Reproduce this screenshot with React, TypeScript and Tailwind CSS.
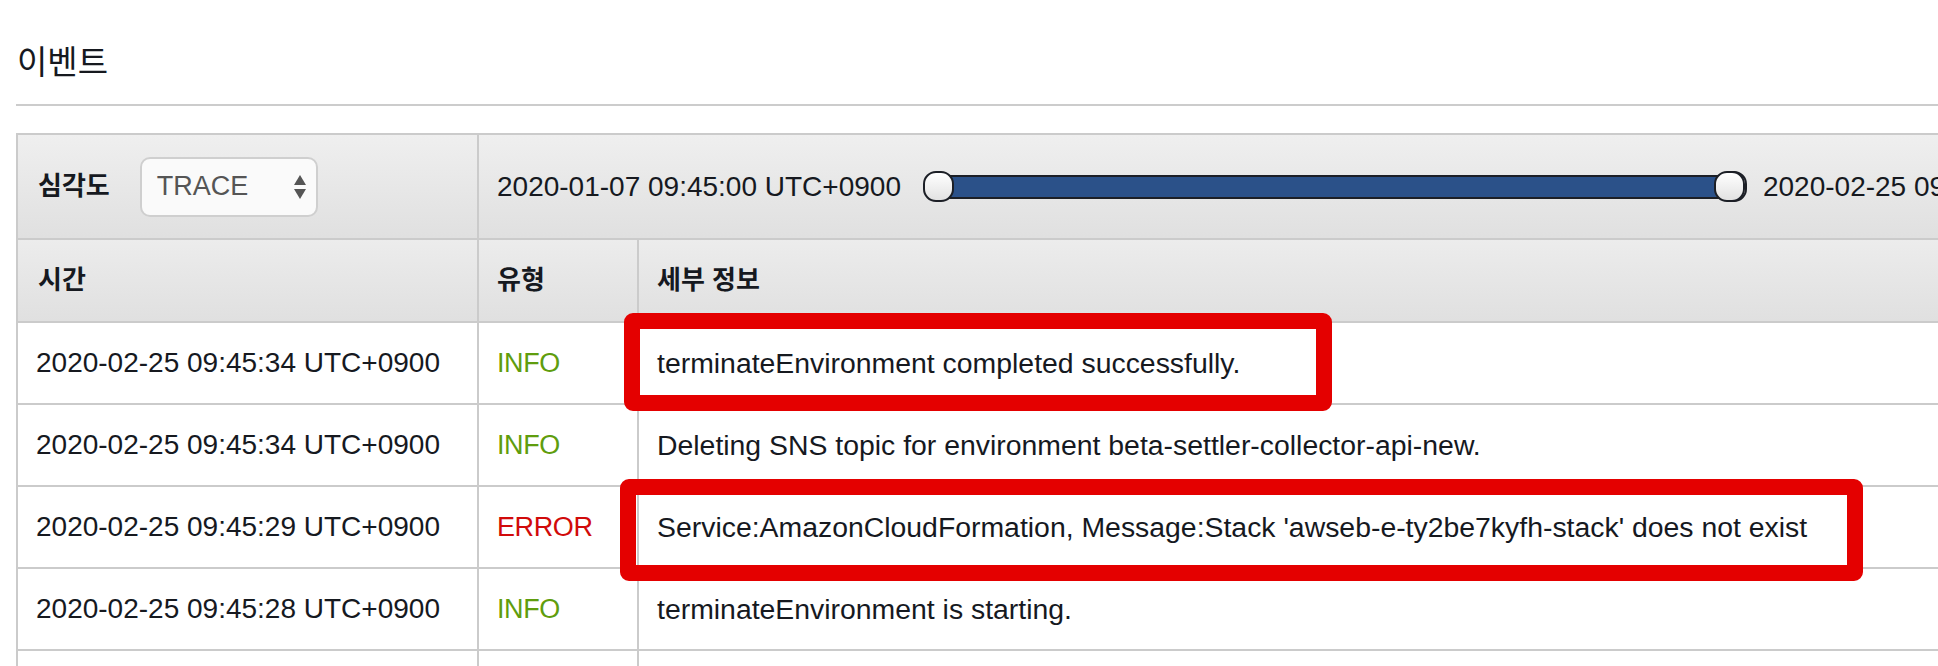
const FONT = { fontFamily: '"Liberation Sans", "Noto Sans CJK KR", Arial, sans-serif' };

type EventRow = {
  time: string;
  type: 'INFO' | 'ERROR' | '';
  detail: string;
};

const rows: EventRow[] = [
  { time: '2020-02-25 09:45:34 UTC+0900', type: 'INFO', detail: 'terminateEnvironment completed successfully.' },
  { time: '2020-02-25 09:45:34 UTC+0900', type: 'INFO', detail: 'Deleting SNS topic for environment beta-settler-collector-api-new.' },
  { time: '2020-02-25 09:45:29 UTC+0900', type: 'ERROR', detail: "Service:AmazonCloudFormation, Message:Stack 'awseb-e-ty2be7kyfh-stack' does not exist" },
  { time: '2020-02-25 09:45:28 UTC+0900', type: 'INFO', detail: 'terminateEnvironment is starting.' },
  { time: '', type: '', detail: '' },
];

function SelectArrows() {
  return (
    <svg width="14" height="26" viewBox="0 0 14 26" className="shrink-0">
      <path d="M7 1 L13 11 L1 11 Z" fill="#555" />
      <path d="M1 15 L13 15 L7 25 Z" fill="#555" />
    </svg>
  );
}

function Knob({ className }: { className: string }) {
  return (
    <div
      className={`absolute top-[-4px] w-[31px] h-[31px] rounded-[13px] border-2 border-[#1c1f26] bg-linear-to-b from-white to-[#e2e2e2] ${className}`}
    />
  );
}

function RangeSlider() {
  return (
    <div className="relative w-[824px] h-[24px] shrink-0">
      <div className="absolute left-[14px] right-[18px] top-0 h-[24px] border-2 border-[#1c1f26] bg-[#2b5189]" />
      <Knob className="left-0" />
      <div className="absolute top-[-4px] left-[798px] w-[26px] h-[31px] rounded-[13px] border-2 border-[#1c1f26] bg-white" />
      <Knob className="left-[791px]" />
    </div>
  );
}

const cell = 'flex items-center px-[18px] border-r-2 border-b-2 border-[#cbcbcb] whitespace-nowrap';

export default function App() {
  return (
    <div className="relative w-full overflow-hidden bg-white h-[666px] text-[#16191f]" style={FONT}>
      <div className="pl-[16px]">
        <div className="pt-[43px] pb-[21px] border-b-2 border-[#cccccc]">
          <h2 className="text-[33px] leading-[40px] font-normal pl-[1px]">이벤트</h2>
        </div>

        <div className="mt-[27px] w-[2260px] grid grid-cols-[461px_160px_1fr] border-t-2 border-l-2 border-[#cbcbcb]">
          {/* filter row */}
          <div className={`${cell} h-[105px] bg-linear-to-b from-[#efefef] to-[#e0e0e0] pl-[20px]`}>
            <span className="text-[26px] font-bold">심각도</span>
            <div className="ml-[30px] w-[178px] h-[60px] rounded-[10px] border-2 border-[#cfcfcf] bg-[#fafafa] flex items-center justify-between pl-[15px] pr-[9px]">
              <span className="text-[27px] text-[#555555]">TRACE</span>
              <SelectArrows />
            </div>
          </div>
          <div className={`${cell} col-span-2 h-[105px] bg-linear-to-b from-[#efefef] to-[#e0e0e0]`}>
            <span className="text-[28px]">2020-01-07 09:45:00 UTC+0900</span>
            <div className="ml-[22px]">
              <RangeSlider />
            </div>
            <span className="ml-[16px] text-[28px]">2020-02-25 09:45:34 UTC+0900</span>
          </div>

          {/* header row */}
          <div className={`${cell} h-[83px] bg-linear-to-b from-[#ececec] to-[#e0e0e0] pl-[20px]`}>
            <span className="text-[26px] font-bold">시간</span>
          </div>
          <div className={`${cell} h-[83px] bg-linear-to-b from-[#ececec] to-[#e0e0e0]`}>
            <span className="text-[26px] font-bold">유형</span>
          </div>
          <div className={`${cell} h-[83px] bg-linear-to-b from-[#ececec] to-[#e0e0e0]`}>
            <span className="text-[26px] font-bold">세부 정보</span>
          </div>

          {/* event rows */}
          {rows.map((r, i) => (
            <div key={i} className="contents">
              <div className={`${cell} h-[82px] bg-white`}>
                <span className="text-[28px]">{r.time}</span>
              </div>
              <div className={`${cell} h-[82px] bg-white`}>
                <span
                  className={`text-[27px] tracking-[-0.4px] ${r.type === 'ERROR' ? 'text-[#d10a0a]' : 'text-[#5f9d0e]'}`}
                >
                  {r.type}
                </span>
              </div>
              <div className={`${cell} h-[82px] bg-white`}>
                <span className="text-[28.4px]">{r.detail}</span>
              </div>
            </div>
          ))}
        </div>
      </div>

      {/* annotation boxes drawn over the screenshot */}
      <div className="absolute left-[624px] top-[313px] w-[708px] h-[98px] border-[16px] border-[#e40000] rounded-[9px]" />
      <div className="absolute left-[620px] top-[479px] w-[1243px] h-[102px] border-[16px] border-[#e40000] rounded-[9px]" />
    </div>
  );
}
